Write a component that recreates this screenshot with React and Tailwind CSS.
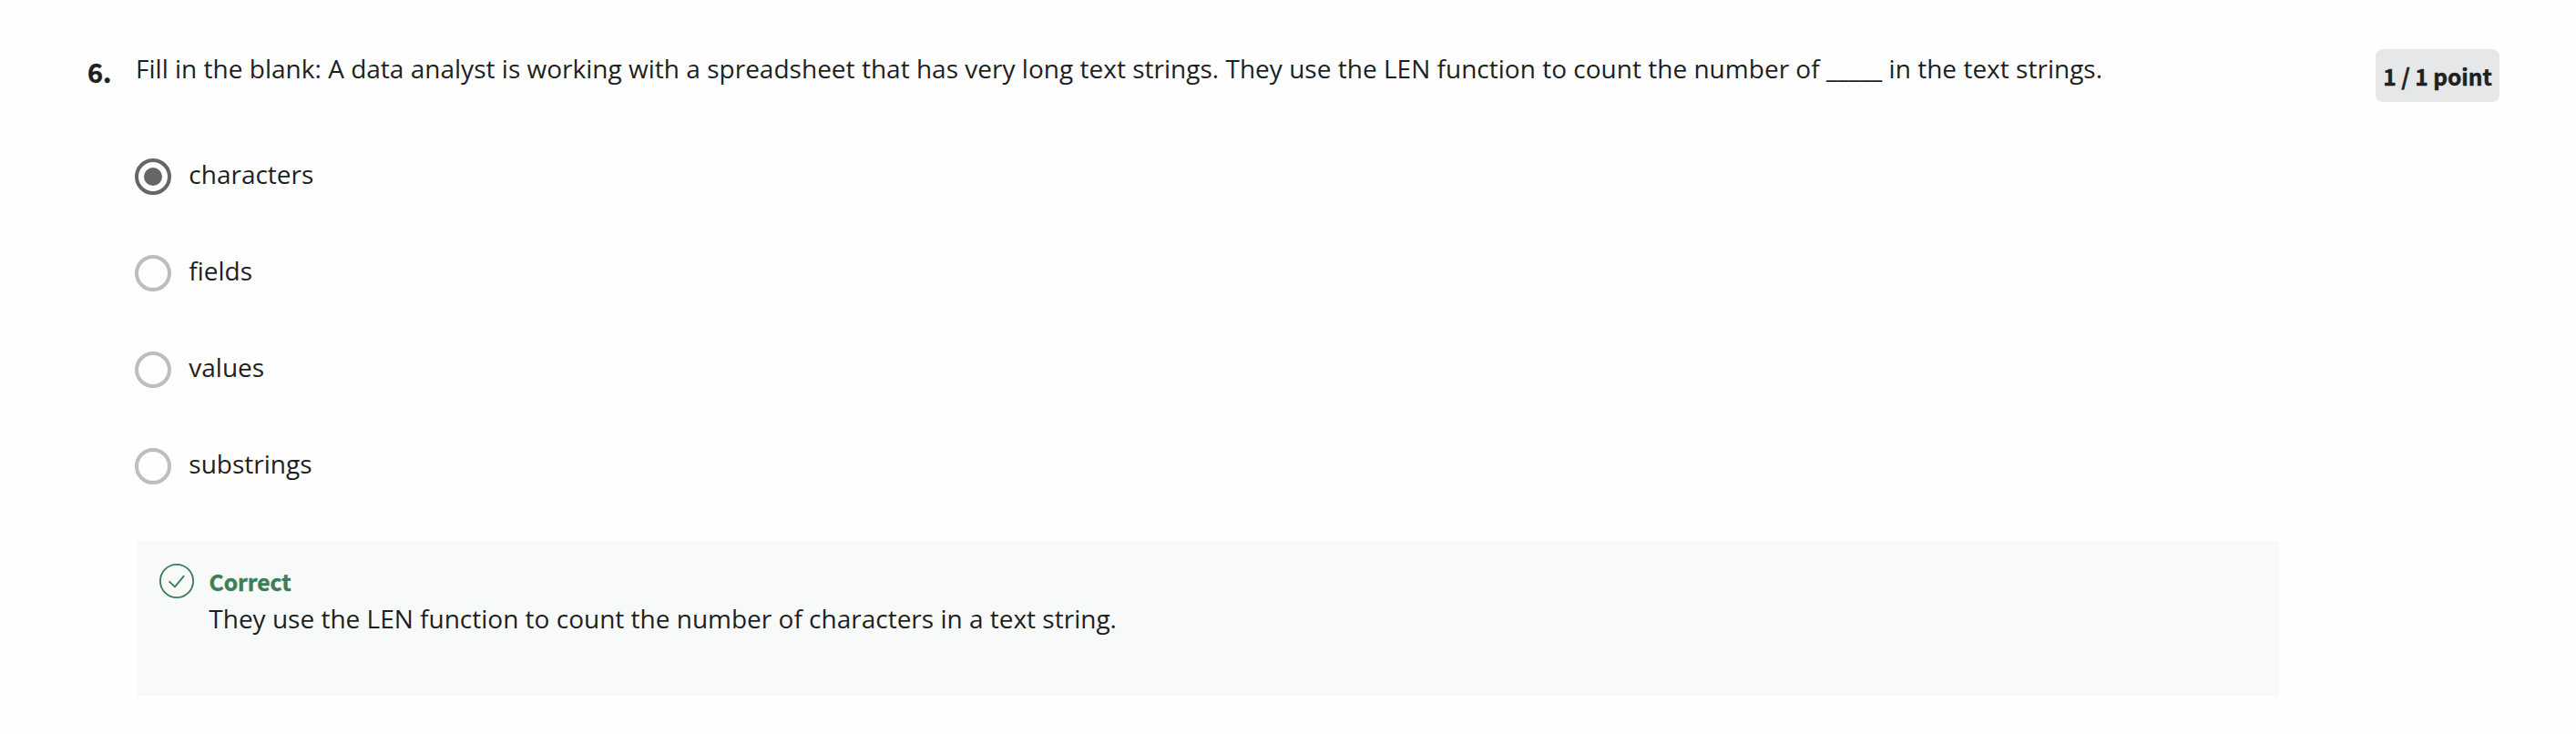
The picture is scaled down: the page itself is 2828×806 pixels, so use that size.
const options = [
  { label: 'characters', checked: true },
  { label: 'fields', checked: false },
  { label: 'values', checked: false },
  { label: 'substrings', checked: false },
];

const display = "font-['Noto_Sans_CJK_SC',sans-serif] font-bold whitespace-nowrap [-webkit-text-stroke:0.5px_currentColor]";

function Radio({ checked }) {
  return (
    <span
      className={
        checked
          ? 'mt-1 flex size-10 shrink-0 items-center justify-center rounded-full border-4 border-[#666666]'
          : 'mt-1 flex size-10 shrink-0 rounded-full border-4 border-[#bdbdbd]'
      }
    >
      {checked && <span className="size-5 rounded-full bg-[#666666]" />}
    </span>
  );
}

function Option({ label, checked }) {
  return (
    <li className="flex h-[106px] items-start">
      <Radio checked={checked} />
      <span className="ml-[19.3px]">{label}</span>
    </li>
  );
}

function Feedback() {
  return (
    <div className="ml-0.5 flex h-[170px] w-[2352px] items-start bg-[#f8fafa] pt-[25px] pl-[25px]">
      <svg className="size-[38px] shrink-0" viewBox="0 0 38 38" fill="none" stroke="#3a7d54">
        <circle cx="19" cy="19" r="18.1" strokeWidth="1.8" />
        <path d="M10.6 19.4 L17 25.4 L27.2 13.2" strokeWidth="1.8" />
      </svg>
      <div className="ml-4 flex flex-col">
        <div className={`${display} mt-px ml-[0.5px] h-9 text-[24.6px] leading-9 text-[#3f7d58]`}>Correct</div>
        <div className="mt-[2px] ml-[0.3px]">They use the LEN function to count the number of characters in a text string.</div>
      </div>
    </div>
  );
}

export default function App() {
  return (
    <main className="flex h-[806px] w-[2828px] items-start overflow-hidden bg-[#fefefe] pt-[54px] font-['Open_Sans',sans-serif] text-[28px] leading-[42px] text-[#1f1f1f]">
      <div className={`${display} ml-24 w-[52px] text-[28.8px] leading-[49px]`}>6.</div>
      <section className="w-[2460px] shrink-0">
        <p className="ml-[1px] h-[116px] tracking-[0.014px] whitespace-nowrap">
          Fill in the blank: A data analyst is working with a spreadsheet that has very long text strings. They use the LEN function to count the number of _____ in the text strings.
        </p>
        <ul className="flex flex-col">
          {options.map((o) => (
            <Option key={o.label} label={o.label} checked={o.checked} />
          ))}
        </ul>
        <Feedback />
      </section>
      <div className={`${display} flex h-[58px] w-[136px] items-center justify-center rounded-[8px] bg-[#e5e7e8] pt-0.5 text-[24.5px] leading-9`}>
        1 / 1 point
      </div>
    </main>
  );
}
